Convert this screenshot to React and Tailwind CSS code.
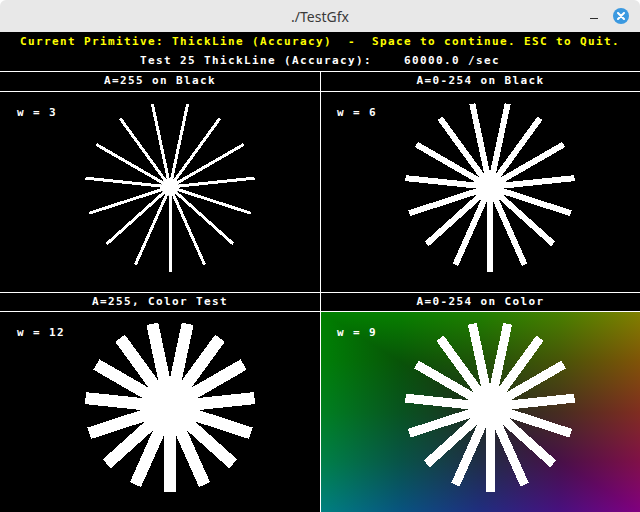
import React from 'react';

const pixelText = "[font-family:'DejaVu_Sans_Mono',monospace] font-bold text-[11px] tracking-[1.38px] whitespace-pre";

// 15 spokes, 24 degrees apart, first one 12 degrees right of straight up
const Burst = ({ cx, cy, w }) => {
    const lines = [];
    for (let k = 0; k < 15; k++) {
        const a = ((12 + 24 * k) * Math.PI) / 180;
        lines.push(
            <line
                key={k}
                x1={cx}
                y1={cy}
                x2={cx + 85 * Math.sin(a)}
                y2={cy - 85 * Math.cos(a)}
                stroke="white"
                strokeWidth={w}
                shapeRendering="crispEdges"
            />
        );
    }
    return (
        <g>
            {lines}
            <circle cx={cx} cy={cy} r={Math.max(9, w * 2.3)} fill="white" />
        </g>
    );
};

const ColorField = ({ width }) => (
    <g className="isolate">
        <defs>
            <linearGradient id="gx" x1="0" y1="0" x2="1" y2="0">
                <stop offset="0" stopColor="rgb(0,128,0)" />
                <stop offset="0.25" stopColor="rgb(0,83,0)" />
                <stop offset="0.5" stopColor="rgb(0,45,0)" />
                <stop offset="0.75" stopColor="rgb(0,16,0)" />
                <stop offset="1" stopColor="rgb(0,0,0)" />
            </linearGradient>
            <linearGradient id="gy" x1="0" y1="0" x2="0" y2="1">
                <stop offset="0" stopColor="rgb(0,128,0)" />
                <stop offset="0.25" stopColor="rgb(0,83,0)" />
                <stop offset="0.5" stopColor="rgb(0,45,0)" />
                <stop offset="0.75" stopColor="rgb(0,16,0)" />
                <stop offset="1" stopColor="rgb(0,0,0)" />
            </linearGradient>
            <linearGradient id="rx" x1="0" y1="0" x2="1" y2="0">
                <stop offset="0" stopColor="rgb(0,0,0)" />
                <stop offset="0.25" stopColor="rgb(8,0,0)" />
                <stop offset="0.5" stopColor="rgb(32,0,0)" />
                <stop offset="0.75" stopColor="rgb(72,0,0)" />
                <stop offset="1" stopColor="rgb(128,0,0)" />
            </linearGradient>
            <linearGradient id="by" x1="0" y1="0" x2="0" y2="1">
                <stop offset="0" stopColor="rgb(0,0,0)" />
                <stop offset="0.25" stopColor="rgb(0,0,8)" />
                <stop offset="0.5" stopColor="rgb(0,0,32)" />
                <stop offset="0.75" stopColor="rgb(0,0,72)" />
                <stop offset="1" stopColor="rgb(0,0,128)" />
            </linearGradient>
        </defs>
        <rect width={width} height="200" fill="url(#gx)" />
        <rect width={width} height="200" fill="url(#gy)" className="mix-blend-lighten" />
        <rect width={width} height="200" fill="url(#by)" className="mix-blend-screen" />
        <rect width={width} height="200" fill="url(#rx)" className="mix-blend-screen" />
    </g>
);

const Panel = ({ width, cx, w, color, labelLeft }) => (
    <div className={`relative h-[200px] ${width === 320 ? 'w-[320px]' : 'flex-1'}`}>
        <svg width={width} height="200" viewBox={`0 0 ${width} 200`} className="block">
            {color && <ColorField width={width} />}
            <Burst cx={cx} cy={95} w={w} />
        </svg>
        <div className={`absolute top-[13px] h-4 leading-4 text-white ${labelLeft}`}>w = {w}</div>
    </div>
);

const App = () => {
    return (
        <div className="w-[640px] h-[512px] bg-white overflow-hidden">
            <div className="h-8 rounded-t-[6px] bg-[#e8e8e8] grid grid-cols-[1fr_auto_1fr] items-center">
                <div />
                <div className="[font-family:'Noto_Sans',sans-serif] text-[14px] text-[#3a3a3a]">./TestGfx</div>
                <div className="flex items-center justify-end pr-[11px] gap-[15px]">
                    <div className="w-2 h-px bg-[#2e2e2e] mt-[5px]" />
                    <div className="w-4 h-4 rounded-full bg-[#3b99e0] flex items-center justify-center">
                        <svg width="8" height="8" viewBox="0 0 8 8">
                            <path d="M1 1L7 7M7 1L1 7" stroke="white" strokeWidth="2" strokeLinecap="round" />
                        </svg>
                    </div>
                </div>
            </div>
            <div className={`bg-black h-[480px] flex flex-col ${pixelText}`}>
                <div className="h-5 flex items-center justify-center text-[#ffff00]">
                    Current Primitive: ThickLine (Accuracy)  -  Space to continue. ESC to Quit.
                </div>
                <div className="h-[19px] flex items-center justify-center text-white">
                    Test 25 ThickLine (Accuracy):    60000.0 /sec
                </div>
                <div className="h-px bg-white" />
                <div className="h-[19px] flex text-white">
                    <div className="w-[320px] flex items-center justify-center">A=255 on Black</div>
                    <div className="w-px bg-white" />
                    <div className="flex-1 flex items-center justify-center">A=0-254 on Black</div>
                </div>
                <div className="h-px bg-white" />
                <div className="h-[200px] flex">
                    <Panel width={320} cx={170} w={3} labelLeft="left-[17px]" />
                    <div className="w-px bg-white" />
                    <Panel width={319} cx={169} w={6} labelLeft="left-[16px]" />
                </div>
                <div className="h-px bg-white" />
                <div className="h-[18px] flex text-white">
                    <div className="w-[320px] flex items-center justify-center">A=255, Color Test</div>
                    <div className="w-px bg-white" />
                    <div className="flex-1 flex items-center justify-center">A=0-254 on Color</div>
                </div>
                <div className="h-px bg-white" />
                <div className="h-[200px] flex">
                    <Panel width={320} cx={170} w={12} labelLeft="left-[17px]" />
                    <div className="w-px bg-white" />
                    <Panel width={319} cx={169} w={9} color labelLeft="left-[16px]" />
                </div>
            </div>
        </div>
    );
};

export default App;
